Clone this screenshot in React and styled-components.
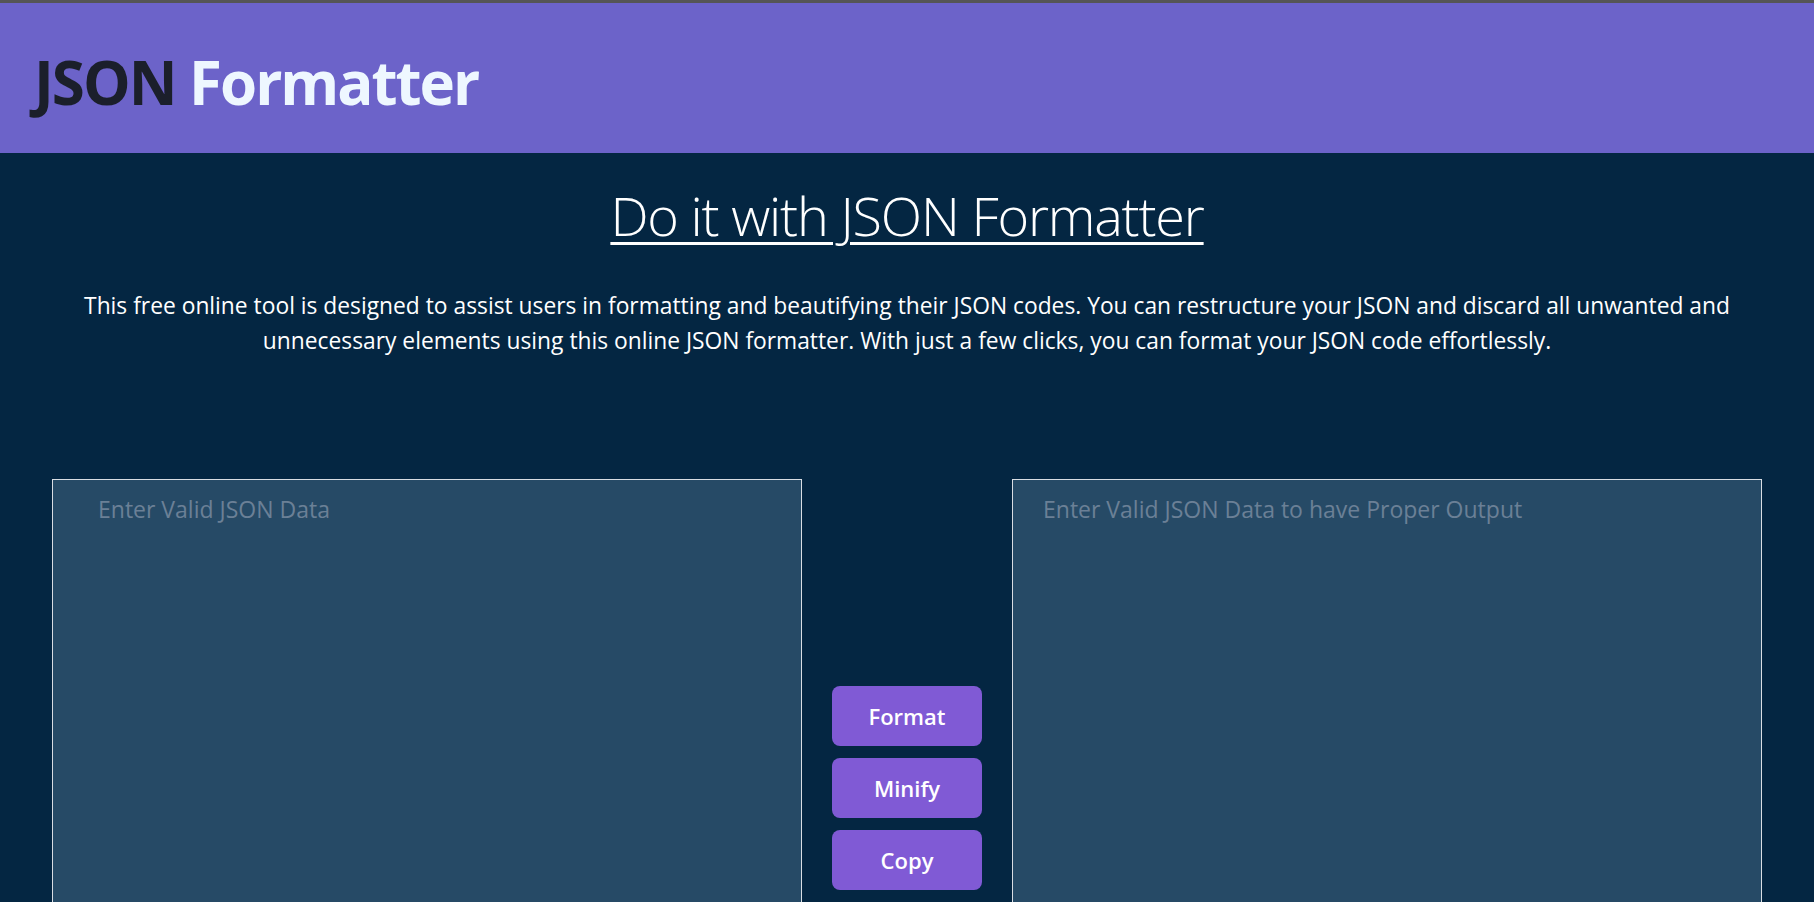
import React from "react";
import styled, { createGlobalStyle } from "styled-components";

const GlobalStyle = createGlobalStyle`
  html, body {
    margin: 0;
    padding: 0;
    background: #042642;
    font-family: "Open Sans", "Noto Sans", sans-serif;
  }
  * { box-sizing: border-box; }
`;

const Page = styled.div`
  min-height: 100vh;
  background: #042642;
  border-top: 3px solid #555555;
`;

const Header = styled.header`
  height: 150px;
  background: #6c63c9;
  display: flex;
  align-items: center;
  padding-left: 34px;
`;

const Title = styled.h1`
  margin: 0;
  font-size: 60px;
  line-height: 1;
  font-weight: 700;
  letter-spacing: -2px;
  padding-top: 8px;
`;

const TitleWord = styled.span`
  color: ${(p) => (p.$light ? "#eef7ff" : "#1b1f2b")};
`;

const Main = styled.main`
  display: flex;
  flex-direction: column;
  align-items: center;
  padding-top: 30px;
`;

const Heading = styled.h2`
  margin: 0;
  font-size: 54px;
  line-height: 1.2;
  font-weight: 300;
  color: #ffffff;
  text-decoration: underline;
  text-decoration-thickness: 3px;
  text-underline-offset: 6px;
  letter-spacing: -1.2px;
`;

const Intro = styled.p`
  margin: 40px 0 0;
  padding: 0 70px;
  font-size: 22.8px;
  line-height: 35px;
  color: #ffffff;
  text-align: center;
`;

const Workspace = styled.section`
  display: flex;
  align-items: center;
  justify-content: center;
  gap: 30px;
  margin-top: 121px;
  width: 100%;
`;

const Editor = styled.textarea`
  width: 750px;
  height: 618px;
  background: #264a66;
  border: 1px solid #d9dde3;
  border-radius: 0;
  color: #ffffff;
  font-family: "Open Sans", "Noto Sans", sans-serif;
  font-size: 23px;
  padding: 13px ${(p) => p.$padX}px;
  resize: none;
  outline: none;

  &::placeholder {
    color: #6b8096;
  }
`;

const Actions = styled.div`
  display: flex;
  flex-direction: column;
  gap: 12px;
  width: 150px;
`;

const ActionButton = styled.button`
  height: 60px;
  width: 150px;
  border: none;
  border-radius: 8px;
  background: #805ad5;
  color: #ffffff;
  font-family: "Open Sans", "Noto Sans", sans-serif;
  font-size: 22px;
  font-weight: 600;
  cursor: pointer;
`;

export default function App() {
  return (
    <>
      <GlobalStyle />
      <Page>
        <Header>
          <Title>
            <TitleWord>JSON</TitleWord> <TitleWord $light>Formatter</TitleWord>
          </Title>
        </Header>
        <Main>
          <Heading>Do it with JSON Formatter</Heading>
          <Intro>
            This free online tool is designed to assist users in formatting and beautifying their JSON codes. You can
            restructure your JSON and discard all unwanted and unnecessary elements using this online JSON formatter.
            With just a few clicks, you can format your JSON code effortlessly.
          </Intro>
          <Workspace>
            <Editor $padX={45} placeholder="Enter Valid JSON Data" />
            <Actions>
              <ActionButton>Format</ActionButton>
              <ActionButton>Minify</ActionButton>
              <ActionButton>Copy</ActionButton>
            </Actions>
            <Editor $padX={30} placeholder="Enter Valid JSON Data to have Proper Output" readOnly />
          </Workspace>
        </Main>
      </Page>
    </>
  );
}
